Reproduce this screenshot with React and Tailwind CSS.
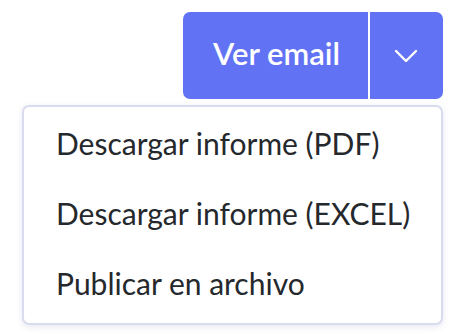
import React from 'react';

const items = [
  'Descargar informe (PDF)',
  'Descargar informe (EXCEL)',
  'Publicar en archivo',
];

const Chevron = () => (
  <svg width="24" height="14" viewBox="0 0 24 14" fill="none">
    <path d="M2 2l10 10L22 2" stroke="white" strokeWidth="2.4" strokeLinecap="round" strokeLinejoin="round" />
  </svg>
);

export default function App() {
  return (
    <div className="w-[464px] h-[334px] bg-white flex flex-col items-end pt-[12px] pr-[21px] font-['Lato',sans-serif]">
      {/* split button */}
      <div className="flex h-[87px] w-[260px] rounded-[7px] bg-[#6173f4] text-white">
        <button className="w-[185px] flex items-center justify-center text-[31px] font-semibold pb-[4px] pl-[2px]">
          Ver email
        </button>
        <div className="w-[1.5px] bg-white" />
        <button className="flex-1 flex items-center justify-center">
          <Chevron />
        </button>
      </div>

      {/* dropdown menu */}
      <div className="mt-[6px] w-[421px] rounded-[7px] border-2 border-[#d8dcee] bg-white py-[3px] shadow-[0_2px_6px_rgba(120,130,190,0.18)]">
        {items.map((label) => (
          <div key={label} className="h-[70px] flex items-center pl-[32px] pb-[4px] text-[30px] text-[#25282c]">
            {label}
          </div>
        ))}
      </div>
    </div>
  );
}
